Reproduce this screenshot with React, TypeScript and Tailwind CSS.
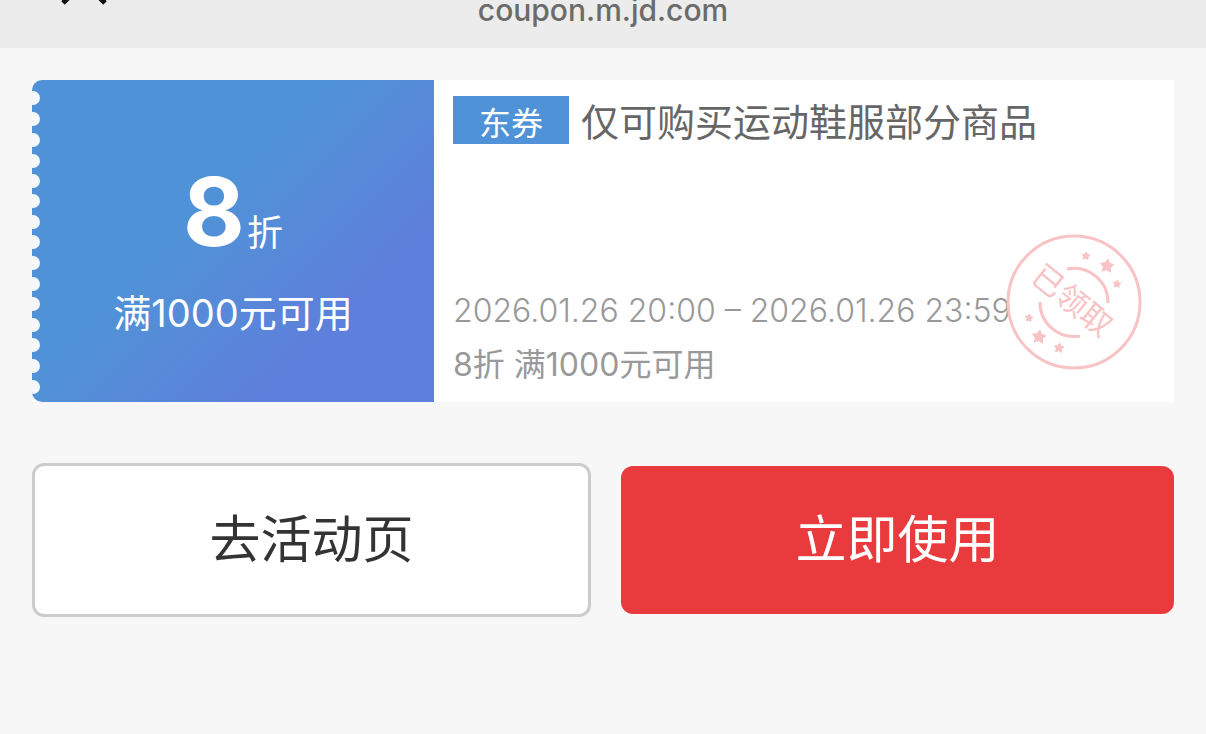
const SCALLOPS = [18, 39, 60, 81, 101, 121, 142, 162, 183, 204, 224, 245, 265, 286, 307];

const STARS = [
  { x: 80, y: 22, r: 4 },
  { x: 101, y: 32, r: 7 },
  { x: 111, y: 50, r: 4 },
  { x: 23, y: 84, r: 4 },
  { x: 33, y: 103, r: 7 },
  { x: 53, y: 114, r: 5 },
];

function starPoints(cx: number, cy: number, r: number) {
  return Array.from({ length: 10 }, (_, i) => {
    const radius = i % 2 === 0 ? r : r * 0.52;
    const angle = (Math.PI / 5) * i - Math.PI / 2 + 0.12;
    return `${cx + radius * Math.cos(angle)},${cy + radius * Math.sin(angle)}`;
  }).join(" ");
}

function ClaimedStamp() {
  return (
    <svg
      role="img"
      aria-label="已领取"
      viewBox="0 0 136 136"
      className="absolute right-8 bottom-8 size-[136px] text-[#f8c3c5]"
      fill="none"
      stroke="currentColor"
    >
      <circle cx="68" cy="68" r="66" strokeWidth="3" />
      <path d="M61 35 A34 34 0 0 1 102 69" strokeWidth="3" />
      <path d="M34 68 A34 34 0 0 0 74 102" strokeWidth="3" />
      {STARS.map((s) => (
        <polygon key={`${s.x}-${s.y}`} points={starPoints(s.x, s.y, s.r)} fill="currentColor" stroke="currentColor" strokeWidth="1" />
      ))}
      <text
        x="66"
        y="78"
        textAnchor="middle"
        transform="rotate(39 67 67)"
        fill="currentColor"
        stroke="none"
        className="text-[31px]"
      >
        已领取
      </text>
    </svg>
  );
}

function Coupon() {
  return (
    <section className="relative flex bg-white">
      <div className="relative flex w-[402px] shrink-0 flex-col items-center overflow-hidden rounded-l-[10px] bg-linear-135 from-[#5092d7] from-42% to-[#5e7fdb] to-76% pt-20 pb-15 text-white">
        <svg className="absolute top-0 left-0 h-full w-2" viewBox="0 0 8 322" aria-hidden="true">
          {SCALLOPS.map((y) => (
            <circle key={y} cx="1" cy={y} r="7" fill="#f5f7fa" />
          ))}
        </svg>
        <p className="flex items-baseline gap-0.5 leading-[104px]">
          <strong className="text-[95px] font-bold">8</strong>
          <span className="text-[36px] leading-10">折</span>
        </p>
        <p className="mt-5 text-[38px] leading-[58px]">满1000元可用</p>
      </div>
      <div className="flex flex-1 flex-col justify-between pt-4 pb-2.5 pl-[19px]">
        <h1 className="flex items-start gap-3 text-[38px] leading-[52px] font-normal text-[#666]">
          <span className="flex h-12 w-[116px] items-center justify-center bg-[#5092d7] pt-2 text-[32px] text-white">
            东券
          </span>
          仅可购买运动鞋服部分商品
        </h1>
        <div className="text-[32px] leading-[54px] text-[#999]">
          <p className="font-light">2026.01.26 20:00 – 2026.01.26 23:59</p>
          <p>8折 满1000元可用</p>
        </div>
      </div>
      <ClaimedStamp />
    </section>
  );
}

export default function App() {
  return (
    <div className="min-h-screen bg-[#f7f7f7] font-['Inter','Noto_Sans_CJK_SC',sans-serif]">
      <header className="relative h-12 overflow-hidden bg-[#ececec] text-center">
        <button type="button" aria-label="关闭" className="absolute -top-10 left-[60px] size-12">
          <svg viewBox="0 0 48 48" fill="none" stroke="#111" strokeWidth="5">
            <path d="M4 2 L45 43 M44 2 L3 43" />
          </svg>
        </button>
        <p className="-mt-2.5 text-[30px] leading-10 font-medium text-[#6b6b6b]">coupon.m.jd.com</p>
      </header>
      <main className="p-8">
        <Coupon />
        <div className="mt-[61px] flex items-center gap-[30px]">
          <button
            type="button"
            className="flex-1 rounded-xl border-3 border-[#ccc] bg-white py-9 text-[51px] leading-[76px] text-[#333]"
          >
            去活动页
          </button>
          <button type="button" className="flex-1 rounded-xl bg-[#e93b3d] py-9 text-[51px] leading-[76px] text-white">
            立即使用
          </button>
        </div>
      </main>
    </div>
  );
}
